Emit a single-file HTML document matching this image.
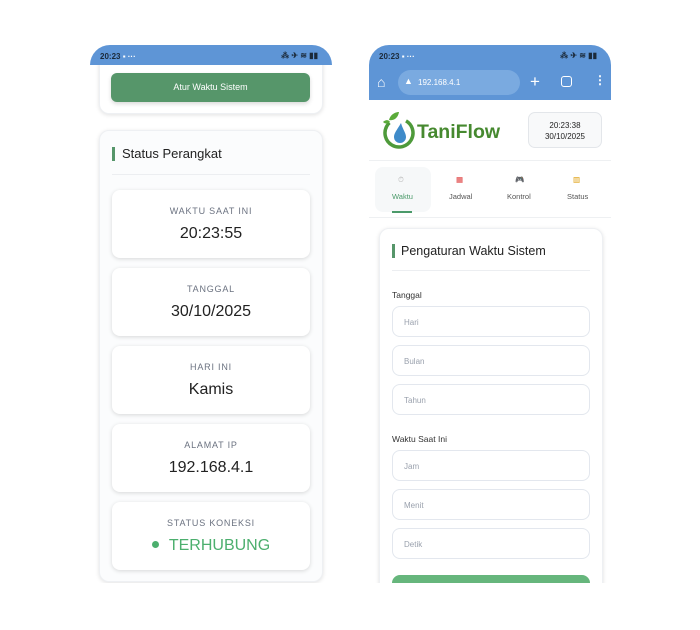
<!DOCTYPE html>
<html><head><style>
*{margin:0;padding:0;box-sizing:border-box}
body{width:700px;height:630px;background:#fff;font-family:"Liberation Sans",sans-serif;position:relative;overflow:hidden}
.a{position:absolute}
.phone{position:absolute;top:45px;width:242px;height:538px;overflow:hidden;border-radius:20px 20px 0 0;background:#fff}
.sb{position:absolute;left:0;top:0;width:242px;height:20px;background:#5e95d6;color:#1b2a3a;font-size:8px;font-weight:bold}
.card{position:absolute;background:#fff;border-radius:10px;box-shadow:0 1px 4px rgba(0,0,0,.12);border:1px solid #eef0f3}
.ic{position:absolute;left:12px;width:198px;height:68px;background:#fff;border-radius:8px;box-shadow:0 1px 4px rgba(0,0,0,.15);text-align:center}
.ic .l{font-size:9px;color:#6b7280;letter-spacing:.8px;margin-top:16px}
.ic .v{font-size:16px;color:#222;margin-top:9px}
.inp{position:absolute;left:12px;width:198px;height:31px;border:1.5px solid #e3e7ee;border-radius:8px;font-size:8px;color:#9aa1ad;padding:11px 0 0 11px}
.lab{position:absolute;left:12px;font-size:8.5px;color:#333}
</style></head><body>

<div class="phone" style="left:90px;background:#fff">
 <div class="card" style="left:9px;top:-20px;width:224px;height:89px"></div>
 <div class="a" style="left:21px;top:28px;width:199px;height:29px;background:#56966a;border-radius:6px;color:#fff;font-size:9px;text-align:center;line-height:29px;box-shadow:0 2px 4px rgba(0,0,0,.15)">Atur Waktu Sistem</div>
 <div class="card" style="left:9px;top:85px;width:224px;height:452px;background:#fbfcfd">
  <div class="a" style="left:12px;top:16px;width:3px;height:14px;background:#56966a"></div>
  <div class="a" style="left:22px;top:15px;font-size:13px;color:#222">Status Perangkat</div>
  <div class="a" style="left:12px;top:43px;width:198px;height:1px;background:#eceef1"></div>
  <div class="ic" style="top:59px"><div class="l">WAKTU SAAT INI</div><div class="v">20:23:55</div></div>
  <div class="ic" style="top:137px"><div class="l">TANGGAL</div><div class="v">30/10/2025</div></div>
  <div class="ic" style="top:215px"><div class="l">HARI INI</div><div class="v">Kamis</div></div>
  <div class="ic" style="top:293px"><div class="l">ALAMAT IP</div><div class="v">192.168.4.1</div></div>
  <div class="ic" style="top:371px"><div class="l">STATUS KONEKSI</div><div class="v" style="color:#4caf6e"><span style="display:inline-block;width:7px;height:7px;border-radius:50%;background:#4caf6e;margin-right:10px;vertical-align:2px"></span>TERHUBUNG</div></div>
 </div>
 <div class="sb"><span class="a" style="left:10px;top:7px">20:23 <span style="color:#fff">▪ ···</span></span><span class="a" style="right:14px;top:6px">⁂ ✈ ≋ ▮▮</span></div>
</div>

<div class="phone" style="left:369px">
 <div class="sb" style="height:55px"><span class="a" style="left:10px;top:7px">20:23 <span style="color:#fff">▪ ···</span></span><span class="a" style="right:14px;top:6px">⁂ ✈ ≋ ▮▮</span>
  <div class="a" style="left:8px;top:29px;color:#fff;font-size:14px">⌂</div>
  <div class="a" style="left:29px;top:25px;width:122px;height:25px;border-radius:13px;background:#7aaae0;color:#fff;font-size:8px;font-weight:normal;padding:8px 0 0 20px">192.168.4.1<span class="a" style="left:6px;top:6px;font-size:9px">▲</span></div>
  <div class="a" style="left:161px;top:27px;color:#fff;font-size:17px;font-weight:normal">+</div>
  <div class="a" style="left:192px;top:31px;width:11px;height:11px;border:1.5px solid #fff;border-radius:3px"></div>
  <div class="a" style="left:225px;top:28px;color:#fff;font-size:12px">⋮</div>
 </div>
 <svg class="a" style="left:10px;top:65px" width="40" height="40" viewBox="0 0 40 40"><circle cx="20" cy="23" r="14" fill="none" stroke="#4e9a3a" stroke-width="3.5" stroke-dasharray="70 18" transform="rotate(-60 20 23)"/><path d="M22 13 C18 20 15 23 15 27 a6 6 0 0 0 12 0 c0-4-3-7-5-14z" fill="#3f8bc9"/><path d="M10 10 c2-7 8-8 10-8 c-1 6-5 9-10 8z M4 12 c3-3 6-2 7 0 c-3 2-5 2-7 0z" fill="#5aab3a"/></svg>
 <div class="a" style="left:48px;top:76px;font-size:19.5px;font-weight:bold;color:#46892f">TaniFlow</div>
 <div class="a" style="left:159px;top:67px;width:74px;height:36px;border:1px solid #e3e6ea;border-radius:7px;background:#f8f9fa;font-size:8px;text-align:center;line-height:11px;padding-top:7px;color:#222">20:23:38<br>30/10/2025</div>
 <div class="a" style="left:0;top:115px;width:242px;height:1px;background:#eef0f2"></div>
 <div class="a" style="left:6px;top:122px;width:56px;height:45px;background:#f6f8f9;border-radius:8px"></div>
 <div class="a" style="left:23px;top:166px;width:20px;height:2px;background:#4b9a6a"></div>
 <div class="a" style="left:0;top:130px;width:242px;font-size:7.5px;color:#555">
  <span class="a" style="left:29px;color:#bbb">⏱</span><span class="a" style="left:87px;color:#d33">▦</span><span class="a" style="left:146px">🎮</span><span class="a" style="left:204px;color:#d90">▥</span>
  <span class="a" style="left:23px;top:17px;color:#4b9a6a">Waktu</span><span class="a" style="left:80px;top:17px">Jadwal</span><span class="a" style="left:138px;top:17px">Kontrol</span><span class="a" style="left:198px;top:17px">Status</span>
 </div>
 <div class="a" style="left:0;top:172px;width:242px;height:1px;background:#eef0f2"></div>
 <div class="card" style="left:10px;top:183px;width:224px;height:380px">
  <div class="a" style="left:12px;top:15px;width:3px;height:14px;background:#56966a"></div>
  <div class="a" style="left:21px;top:15px;font-size:12.5px;color:#222">Pengaturan Waktu Sistem</div>
  <div class="a" style="left:12px;top:41px;width:198px;height:1px;background:#eceef1"></div>
  <div class="lab" style="top:61px">Tanggal</div>
  <div class="inp" style="top:77px">Hari</div>
  <div class="inp" style="top:116px">Bulan</div>
  <div class="inp" style="top:155px">Tahun</div>
  <div class="lab" style="top:205px">Waktu Saat Ini</div>
  <div class="inp" style="top:221px">Jam</div>
  <div class="inp" style="top:260px">Menit</div>
  <div class="inp" style="top:299px">Detik</div>
  <div class="a" style="left:12px;top:346px;width:198px;height:30px;background:#66b67c;border-radius:8px"></div>
 </div>
</div>
</body></html>
